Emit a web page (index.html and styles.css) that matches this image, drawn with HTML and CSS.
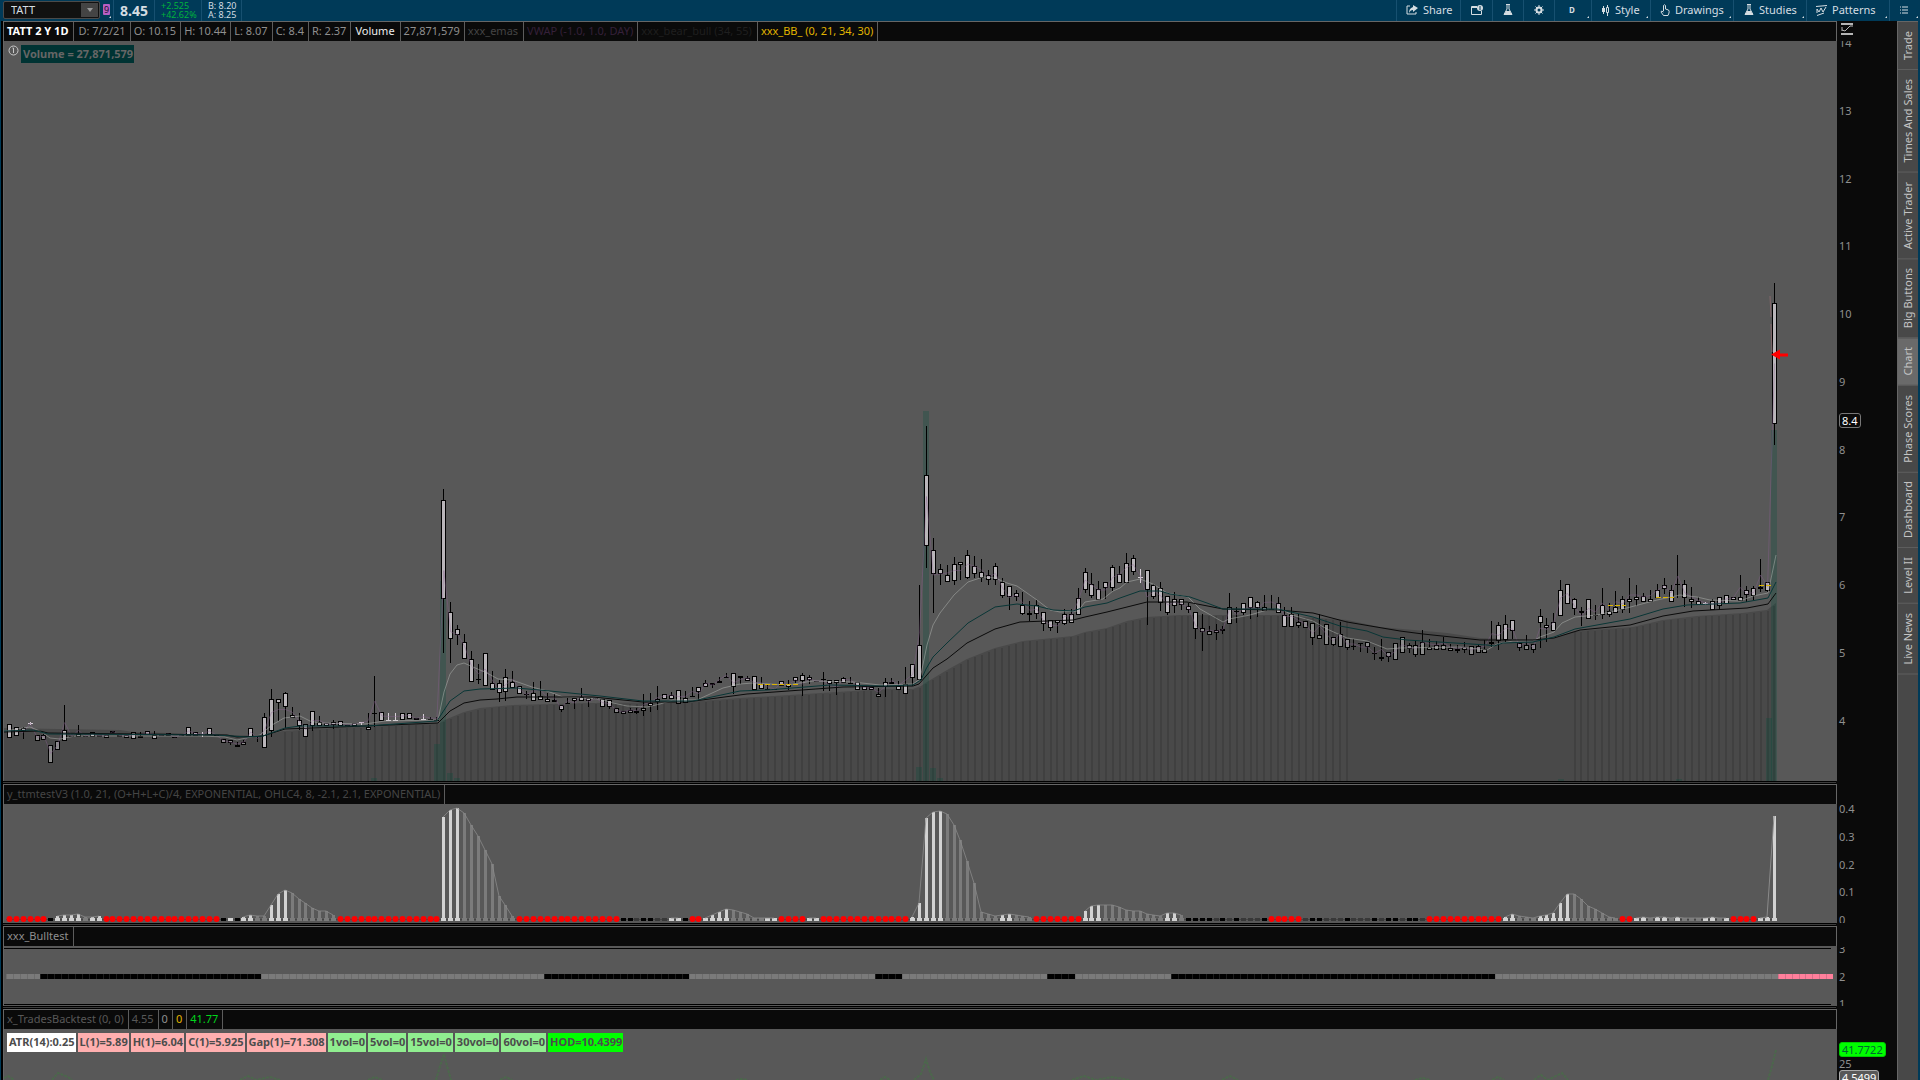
FILE: index.html
```html
<!DOCTYPE html>
<html lang="en">
<head>
<meta charset="utf-8">
<title>TATT - Charts</title>
<link rel="stylesheet" href="styles.css">
</head>
<body>
<header class="toolbar">
  <div class="symbol-box">
    <input class="symbol-input" type="text" value="TATT" aria-label="Symbol">
    <button class="symbol-drop" aria-label="Symbol list"><svg width="6" height="4" viewBox="0 0 6 4"><path d="M0 0h6L3 4z" fill="#999"/></svg></button>
  </div>
  <button class="link-color corner" aria-label="Link color"><span class="link-chip">9</span></button>
  <div class="quote-last">8.45</div>
  <div class="quote-pair up"><span>+2.525</span><span>+42.62%</span></div>
  <div class="quote-pair"><span>B: 8.20</span><span>A: 8.25</span></div>
  <nav class="tools">
    <button class="tool share"><svg width="12" height="10" viewBox="0 0 12 10"><path d="M4 1H1v8h9V7" fill="none" stroke="#d5dde2"/><path d="M7 0l5 3-5 4V5C5 5 4 6 3 8c0-3 1-5 4-6z" fill="#d5dde2"/></svg>Share</button>
    <button class="tool snap" aria-label="Detach"><svg width="12" height="10" viewBox="0 0 12 10"><path d="M6 1.500H.5v8h10V6" fill="none" stroke="#d5dde2"/><path d="M1 2h5" stroke="#d5dde2" stroke-width="2"/><circle cx="9" cy="3" r="3" fill="#d5dde2"/><path d="M9 1v4" stroke="#003a58"/></svg></button>
    <button class="tool flask" aria-label="Edit studies"><svg width="10" height="12" viewBox="0 0 10 12"><path d="M3 .5h4M4 1v4L1 10.500h8L6 5V1" fill="none" stroke="#d5dde2"/><path d="M3 7h4l2 4H1z" fill="#d5dde2"/></svg></button>
    <button class="tool gear" aria-label="Settings"><svg width="10" height="10" viewBox="0 0 10 10"><circle cx="5" cy="5" r="2.500" fill="none" stroke="#d5dde2" stroke-width="2"/><path d="M5 0v2M5 8v2M0 5h2M8 5h2M1.500 1.500L3 3M7 7l1.500 1.500M8.500 1.500L7 3M3 7L1.500 8.500" stroke="#d5dde2"/></svg></button>
    <button class="tool period corner">D</button>
    <button class="tool style corner"><svg width="9" height="11" viewBox="0 0 9 11"><path d="M2.500 1v8M6.500 0v11" stroke="#d5dde2"/><path d="M1 3h3v4H1z" fill="#d5dde2"/><path d="M5.500 2.500h2v5h-2z" fill="#003a58" stroke="#d5dde2"/></svg>Style</button>
    <button class="tool drawings corner"><svg width="10" height="12" viewBox="0 0 10 12"><path d="M3.500 7V1.500Q4.500 0 5.500 1.500V5l3 1q1 1 .5 3L8 11.500H3.500L1 8q0-2 2.500 0" fill="none" stroke="#d5dde2"/></svg>Drawings</button>
    <button class="tool studies corner"><svg width="10" height="12" viewBox="0 0 10 12"><path d="M3 .5h4M4 1v4L1 10.500h8L6 5V1" fill="none" stroke="#d5dde2"/><path d="M3 7h4l2 4H1z" fill="#d5dde2"/></svg>Studies</button>
    <button class="tool patterns corner"><svg width="11" height="11" viewBox="0 0 11 11"><path d="M0 1.500L11 .5M1 10.500L8 8M1 8V4l2 3 2-4 2 4 3-5" fill="none" stroke="#d5dde2"/></svg>Patterns</button>
    <button class="tool menu corner" aria-label="Menu"><svg width="8" height="8" viewBox="0 0 8 8"><path d="M0 1h1M2 1h6M0 4h1M2 4h6M0 7h1M2 7h6" stroke="#d5dde2"/></svg></button>
  </nav>
</header>
<div class="workspace">
  <main class="charts">
    <section class="panel">
      <div class="frame">
        <div class="legend">
          <span class="title">TATT 2 Y 1D</span><span class="date">D: 7/2/21</span><span>O: 10.15</span><span>H: 10.44</span><span>L: 8.07</span><span>C: 8.4</span><span>R: 2.37</span><span class="bright">Volume</span><span>27,871,579</span><span class="emas">xxx_emas</span><span class="vwap">VWAP (-1.0, 1.0, DAY)</span><span class="bear">xxx_bear_bull (34, 55)</span><span class="bands">xxx_BB_ (0, 21, 34, 30)</span>
        </div>
        <div class="plot">
          <svg id="price" viewBox="4 41 1833 740" preserveAspectRatio="none"></svg>
          <div class="plot-note"><svg width="11" height="11" viewBox="0 0 11 11"><circle cx="5.500" cy="5.500" r="4.500" fill="none" stroke="#c8c8c8"/><path d="M5.500 3v5M4.500 3h1" stroke="#c8c8c8"/></svg><span>Volume = 27,871,579</span></div>
        </div>
      </div>
      <div class="axis">
        <button class="scale-btn" aria-label="Price scale"><svg width="12" height="12" viewBox="0 0 12 12"><path d="M0 1h12M0 11h12" stroke="#b5b5b5" stroke-width="2"/><path d="M1 4v4M1 7l3 1 5-5 3 0" fill="none" stroke="#b5b5b5"/></svg></button>
        <ul class="ticks price-ticks"><li>14</li><li>13</li><li>12</li><li>11</li><li>10</li><li>9</li><li>8</li><li>7</li><li>6</li><li>5</li><li>4</li></ul>
        <span class="badge last">8.4</span>
      </div>
    </section>
    <div class="divider"></div>
    <section class="panel">
      <div class="frame">
        <div class="legend"><span class="ttm">y_ttmtestV3 (1.0, 21, (O+H+L+C)/4, EXPONENTIAL, OHLC4, 8, -2.1, 2.1, EXPONENTIAL)</span></div>
        <div class="plot"><svg id="ttm" viewBox="4 804 1833 119" preserveAspectRatio="none"></svg></div>
      </div>
      <div class="axis"><ul class="ticks ttm-ticks"><li>0.4</li><li>0.3</li><li>0.2</li><li>0.1</li><li>0</li></ul></div>
    </section>
    <div class="divider"></div>
    <section class="panel">
      <div class="frame">
        <div class="legend"><span class="bulltest">xxx_Bulltest</span></div>
        <div class="plot"><svg id="bull" viewBox="4 946 1833 60" preserveAspectRatio="none"></svg></div>
      </div>
      <div class="axis"><ul class="ticks bull-ticks"><li>3</li><li>2</li><li>1</li></ul></div>
    </section>
    <div class="divider"></div>
    <section class="panel">
      <div class="frame">
        <div class="legend"><span class="trades">x_TradesBacktest (0, 0)</span><span class="trades">4.55</span><span>0</span><span class="bands">0</span><span class="gain">41.77</span></div>
        <div class="plot">
          <svg id="trades" viewBox="4 1029 1833 51" preserveAspectRatio="none"></svg>
          <div class="chips"><span class="white">ATR(14):0.25</span><span class="pink">L(1)=5.89</span><span class="pink">H(1)=6.04</span><span class="pink">C(1)=5.925</span><span class="pink">Gap(1)=71.308</span><span class="green">1vol=0</span><span class="green">5vol=0</span><span class="green">15vol=0</span><span class="green">30vol=0</span><span class="green">60vol=0</span><span class="lime">HOD=10.4399</span></div>
        </div>
      </div>
      <div class="axis"><ul class="ticks trade-ticks"><li>50</li><li>25</li></ul><span class="badge hot">41.7722</span><span class="badge cold">4.5499</span></div>
    </section>
  </main>
  <nav class="gadgets">
    <button>Trade</button><button>Times And Sales</button><button>Active Trader</button><button>Big Buttons</button><button class="on">Chart</button><button>Phase Scores</button><button>Dashboard</button><button>Level II</button><button>Live News</button>
  </nav>
</div>
<script src="chart.js"></script>
</body>
</html>
```
FILE: styles.css
```css
* { box-sizing: border-box; }
body {
  margin: 0;
  height: 100vh;
  display: flex;
  flex-direction: column;
  overflow: hidden;
  background: #003a58;
  color: #8f8f8f;
  font: 11px/14px "Noto Sans", "Open Sans", sans-serif;
}
button, input { font: inherit; color: inherit; background: none; border: 0; padding: 0; margin: 0; }
ul { list-style: none; margin: 0; padding: 0; }

.toolbar { flex: none; display: flex; height: 21px; padding-left: 3px; color: #d5dde2; }
.symbol-box { display: flex; width: 97px; height: 18px; margin-top: 1px; background: #111; border: 1px solid #4a4a4a; border-radius: 2px; }
.symbol-input { flex: 1; min-width: 0; padding: 0 7px; }
.symbol-drop { width: 17px; margin: 1px; background: #444; display: grid; place-items: center; }
.link-color { width: 14px; display: flex; padding: 4px 3px; border-right: 1px solid #175070; }
.link-chip { width: 8px; height: 11px; background: #b65fc4; color: #1a1030; font: 9px/11px "Noto Sans", sans-serif; border-radius: 1px; }
.corner { position: relative; }
.corner::after { content: ""; position: absolute; right: 2px; bottom: 3px; border: 1px solid #d5dde2; border-top-color: transparent; border-left-color: transparent; }
.quote-last { width: 41px; padding-left: 6px; font-size: 14px; line-height: 21px; font-weight: 700; border-right: 1px solid #175070; }
.quote-pair { display: flex; flex-direction: column; width: 47px; padding: 1px 0 0 6px; font-size: 9px; line-height: 9px; border-right: 1px solid #175070; }
.quote-pair + .quote-pair { width: 40px; }
.up { color: #00b33c; }
.tools { display: flex; margin-left: auto; }
.tool { display: flex; align-items: center; gap: 5px; padding: 0 9px 1px; border-left: 1px solid #175070; }
.tool svg { flex: none; }
.share { width: 64px; }
.snap { width: 32px; padding-left: 10px; }
.flask, .gear { width: 31px; padding-left: 10px; }
.period { width: 37px; padding-left: 14px; font-size: 8px; font-weight: 700; }
.style { width: 59px; }
.drawings { width: 83px; }
.studies { width: 73px; padding-left: 10px; }
.patterns { width: 83px; }
.menu { width: 31px; padding-left: 10px; }

.workspace { flex: 1; min-height: 0; display: flex; margin: 0 2px 0 1px; padding-left: 2px; background: #000; }
.charts { flex: 1; min-width: 0; display: grid; grid-template-rows: 760fr 3px 139fr 3px 80fr 3px 71fr; background: #0a0a0a; }
.divider { margin-right: 61px; background: linear-gradient(#000 1px, #3c3c3c 1px, #3c3c3c 2px, #000 2px); }
.panel { display: grid; grid-template-columns: minmax(0, 1fr) 60px; min-height: 0; }
.frame { display: flex; flex-direction: column; min-height: 0; border-left: 1px solid #666; }
.legend { flex: none; display: flex; height: 20px; background: #0a0a0a; border-top: 1px solid #666; border-right: 1px solid #666; white-space: nowrap; line-height: 17px; }
.legend span { padding: 0 4px 0 3px; border-right: 1px solid #5c5c5c; }
.legend .title { padding-right: 5px; color: #fff; font-weight: 700; }
.legend .date { padding-left: 4px; }
.legend .bright { padding: 0 5px 0 4px; color: #eee; }
.legend .bulltest { padding-right: 5px; }
.legend .emas { padding-right: 5px; color: #444; }
.legend .vwap { color: #352039; }
.legend .bear { padding-right: 5px; color: #1f1f1f; }
.legend .bands { color: #e0b400; }
.legend .ttm { color: #454545; }
.legend .trades { color: #585858; }
.legend .gain { color: #00d61c; }
.plot { flex: 1; position: relative; min-height: 0; background: #585858; }
.plot > svg { display: block; width: 100%; height: 100%; }
.plot-note { position: absolute; top: 4px; left: 4px; display: flex; gap: 2px; }
.plot-note span { padding: 0 1px 0 2px; background: #003333; color: #666; font-weight: 700; line-height: 18px; }

.axis { position: relative; min-height: 0; overflow: hidden; }
.scale-btn { display: block; height: 12px; margin: 2px 0 0 4px; }
.scale-btn svg { display: block; }
.ticks { display: flex; flex-direction: column; justify-content: space-between; padding-left: 2px; }
.price-ticks { height: 91%; margin-top: 1px; }
.price-ticks li:first-child { clip-path: inset(5px 0 0 0); }
.ttm-ticks { height: 100%; padding-top: 18px; }
.ttm-ticks li:last-child { margin-bottom: -4px; }
.bull-ticks { height: 100%; padding-top: 16px; }
.bull-ticks li:first-child { clip-path: inset(5px 0 0 0); }
.bull-ticks li:last-child { margin-bottom: -5px; }
.trade-ticks { height: 62px; padding-top: 32px; }
.badge { position: absolute; left: 2px; padding: 0 2px; height: 15px; line-height: 13px; border: 1px solid #777; border-radius: 3px; background: #0a0a0a; color: #fff; }
.last { top: 52%; margin-top: -3px; }
.hot { top: 33px; background: #0f0; border-color: #0c0; color: #063; }
.cold { top: 61px; background: #585858; border-color: #aaa; }
.chips { position: absolute; top: 4px; left: 3px; display: flex; gap: 2px; white-space: nowrap; }
.chips span { padding: 0 1px 1px 2px; line-height: 18px; font-weight: 700; color: #4c4c4c; }
.white { background: #fff; }
.pink { background: #ffafaf; }
.green { background: #90ee90; }
.lime { background: #0f0; }

.gadgets { flex: none; width: 21px; background: #484848; border-left: 1px solid #666; border-top: 1px solid #666; display: flex; flex-direction: column; }
.gadgets button { writing-mode: vertical-rl; transform: rotate(180deg); width: 20px; padding: 9px 0; text-align: center; color: #c4c4c4; border-top: 1px solid #5f5f5f; white-space: nowrap; }
.gadgets .on { background: #6a6a6a; }
```
FILE: chart.js
```js
const FIRST = 9.5, STEP = 6.8945;
const xAt = i => FIRST + STEP * i;
const rect = (x, y, w, h, fill, extra = '') =>
  `<rect x="${x}" y="${y}" width="${w}" height="${h}" fill="${fill}" ${extra}/>`;
const line = (points, stroke, extra = '') =>
  `<polyline points="${points}" fill="none" stroke="${stroke}" ${extra}/>`;

// One bar per entry: high, body top, body bottom, low. A leading * marks a bright doji.
const bars = `724 724 737 737|727 727 735 735|727 728 730 738|*722 723 723 724|735 735 740 740|733 735 739 739|745 745 762 762|741 741 749 749|705 730 740 740|736 736 736 736|725 734 736 736|736 736 736 736|732 732 736 736|735 735 736 736|735 735 737 737|731 731 732 732|735 735 736 736|735 735 737 737|732 732 738 738|732 736 737 737|731 731 734 734|731 735 738 738|735 735 735 735|733 733 735 735|737 737 737 737|735 735 735 735|727 727 735 735|732 732 735 735|*732 734 734 736|728 728 734 734|735 735 735 735|739 739 742 742|740 740 742 744|742 745 746 746|740 742 744 744|728 728 736 736|736 736 736 741|713 717 747 747|689 699 730 736|699 699 702 720|692 693 706 727|707 715 717 717|713 720 725 729|724 724 736 736|711 711 725 730|716 722 725 725|723 723 725 725|720 722 724 728|721 721 725 725|725 725 725 725|723 723 725 725|*722 722 722 724|713 727 729 729|676 713 713 726|712 712 720 720|*713 720 720 720|*713 720 720 720|713 713 719 719|713 713 718 718|718 718 719 719|*714 719 719 719|717 719 719 719|717 720 720 720|489 500 598 652|602 612 638 662|625 629 634 644|634 642 658 658|651 659 681 681|664 679 679 683|653 653 685 685|671 683 689 689|680 683 692 701|669 677 691 700|671 682 687 687|686 686 693 693|691 694 694 698|682 693 700 700|681 696 699 699|693 699 701 701|694 700 701 701|705 705 709 711|698 703 703 703|698 698 700 708|688 697 700 700|698 698 700 706|698 698 698 698|699 699 706 706|700 700 706 708|708 708 712 712|711 711 713 713|708 710 712 712|708 711 712 713|694 708 710 715|693 703 705 711|686 699 701 709|694 694 698 698|692 695 698 698|690 690 703 703|691 698 702 702|687 696 696 696|687 687 691 700|680 683 686 686|683 683 684 687|677 681 682 682|673 677 677 677|673 673 686 693|676 676 677 683|676 678 680 680|676 676 689 689|677 684 688 688|685 689 689 689|689 689 689 689|681 681 685 685|680 684 686 689|677 677 680 682|673 675 680 695|675 677 679 683|681 681 681 681|672 679 679 690|680 680 683 690|680 680 682 694|677 678 682 682|677 683 683 683|682 682 689 689|686 686 689 689|687 687 689 689|688 694 696 696|678 682 686 696|678 682 683 683|681 686 689 689|667 684 693 693|664 664 677 685|585 645 679 679|426 475 545 567|538 550 573 612|564 569 573 584|565 575 581 581|557 564 580 584|562 562 564 579|550 555 577 578|556 566 573 577|559 572 577 581|570 575 579 584|563 566 579 584|578 582 595 597|586 586 596 609|590 593 596 600|592 605 613 614|601 613 614 620|600 605 613 618|612 612 623 630|620 620 627 630|620 620 622 632|609 614 623 624|609 614 622 622|588 598 614 614|568 572 589 592|573 584 595 597|581 589 599 599|582 582 587 598|565 567 587 590|566 574 582 582|553 563 582 582|555 558 571 574|*569 577 577 582|570 570 589 624|584 585 596 598|582 588 602 610|596 596 612 614|592 599 605 612|599 599 604 609|603 606 609 612|612 612 628 638|614 628 631 650|626 631 634 634|624 630 632 639|626 629 630 633|593 607 623 623|607 611 611 622|603 603 612 614|597 597 607 618|601 602 607 616|595 607 610 610|595 609 609 609|597 603 612 612|607 615 626 626|607 614 626 626|614 622 625 627|621 621 627 627|623 623 637 644|614 635 638 638|624 624 644 644|637 637 644 645|622 634 646 646|639 639 647 649|639 646 646 649|643 643 643 651|642 642 646 652|647 653 653 659|639 657 658 660|652 652 656 661|643 643 659 659|637 637 652 652|643 645 648 652|641 645 654 656|630 642 654 654|639 647 649 649|641 645 649 649|637 645 649 649|644 648 650 650|645 649 650 652|642 647 649 652|646 646 654 654|644 646 652 652|640 649 652 652|621 642 643 646|622 625 640 649|615 624 639 641|620 620 630 638|643 643 647 650|635 645 649 649|644 644 649 652|609 616 622 647|618 625 627 641|613 622 630 630|580 590 615 615|584 584 603 603|598 599 608 614|607 611 612 625|599 599 618 618|605 615 615 619|588 605 614 618|603 611 614 616|591 607 612 612|596 599 609 612|578 599 601 612|585 597 599 605|593 596 601 601|590 599 601 601|584 590 597 597|578 585 588 593|585 590 601 601|555 584 584 597|580 584 597 606|587 599 601 607|597 601 604 604|*602 603 603 604|599 601 609 609|597 597 605 609|595 595 603 603|597 597 599 599|575 597 600 600|586 590 594 601|586 588 595 599|559 587 588 591|582 582 590 591|283 303 423 444`
  .split('|').map(s => ({ bright: s[0] === '*', v: s.replace('*', '').split(' ').map(Number) }));

const cloud = '4,728 57,729 120,730 133,732 200,734 263,736 283,731 333,728 440,723 447,719 464,712 480,708 513,705 593,703 687,702 740,698 790,695 853,691 887,689 913,689 921,686 927,682 947,670 967,659 995,648 1023,641 1073,636 1085,632 1107,628 1127,621 1147,617 1180,615 1278,615 1347,620 1380,627 1447,633 1480,638 1533,640 1554,638 1575,631 1633,627 1663,620 1697,616 1743,613 1767,610 1776,603';
const fast = '4,731 30,727 40,731 50,738 60,739 75,736 200,736 225,737 237,740 260,735 272,725 284,718 300,716 310,721 320,723 365,724 385,721 438,720 444,692 450,674 457,665 464,663 473,667 487,673 498,679 512,680 532,687 547,691 563,697 600,699 613,703 627,706 647,707 660,704 673,700 697,700 710,694 723,688 740,684 753,683 787,685 813,681 853,682 880,685 913,684 920,679 927,645 933,625 940,613 954,595 968,582 983,577 995,578 1007,583 1017,586 1037,600 1050,610 1060,612 1078,611 1085,602 1103,599 1113,591 1120,588 1127,582 1140,579 1153,584 1167,593 1188,597 1200,609 1223,622 1229,619 1250,615 1267,610 1283,610 1292,615 1313,621 1327,629 1347,638 1367,641 1387,649 1400,648 1460,647 1487,650 1497,644 1513,641 1533,641 1540,637 1554,632 1562,623 1575,617 1597,615 1623,609 1657,600 1680,595 1697,597 1710,600 1740,601 1753,596 1768,593 1776,555';
const mid = '4,731 33,730 48,734 217,735 247,737 263,736 285,728 300,726 367,726 437,721 450,701 464,691 480,689 517,688 550,691 600,696 643,701 693,701 740,691 767,690 830,685 887,686 913,685 921,680 926,669 933,657 947,643 968,623 995,607 1017,604 1037,606 1053,610 1073,611 1085,607 1107,603 1120,598 1140,591 1160,591 1170,594 1190,597 1207,603 1223,609 1278,609 1313,617 1340,626 1367,631 1383,637 1407,640 1487,645 1494,646 1503,643 1533,642 1554,637 1575,629 1630,619 1663,609 1687,605 1740,603 1768,598 1776,582';
const slow = '4,732 40,731 48,733 227,735 237,737 263,736 285,729 340,727 438,723 450,711 464,703 480,700 497,699 517,697 593,697 643,702 687,702 747,694 843,687 913,686 919,684 933,668 947,659 967,643 995,629 1020,622 1073,620 1085,617 1107,612 1147,602 1187,602 1223,609 1278,610 1313,613 1347,622 1400,631 1423,634 1480,640 1533,640 1554,638 1580,630 1630,625 1663,616 1693,611 1747,608 1768,604 1776,593';

let out = `<polygon points="${cloud} 1776,781 4,781" fill="#494949"/>`;
const cloudPts = cloud.split(' ').map(p => p.split(',').map(Number));
const cloudY = x => {
  const k = cloudPts.findIndex(p => p[0] >= x);
  if (k < 1) return 603;
  const [a, b] = [cloudPts[k - 1], cloudPts[k]];
  return a[1] + (b[1] - a[1]) * (x - a[0]) / (b[0] - a[0]);
};
for (let i = 40; i <= 256; i++) {
  if (i > 194 && i < 227) continue;
  const x = Math.round(xAt(i) - 1), y = Math.round(cloudY(x)) + 1;
  out += rect(x, y, 2, 781 - y, '#404040');
}
// Volume columns
[[434, 744], [440, 581], [447, 773], [454, 778], [371, 778], [916, 767], [923, 411], [930, 768], [937, 778], [1766, 718], [1771, 430], [1558, 779], [1676, 779]]
  .forEach(([x, y]) => { out += rect(x, y, 6, 781 - y, '#004d3a', 'fill-opacity=".26"'); });

bars.forEach(({ bright, v: [h, t, b, l] }, i) => {
  const c = Math.floor(xAt(i)), ink = bright ? '#d8d0d8' : '#000';
  if (l > h) out += rect(c, h, 1, l - h + 1, ink);
  if (b - t < 2) out += rect(c - 2, t, 5, b - t + 1, ink);
  else out += rect(c - 2, t, 5, b - t + 1, '#000') + rect(c - 1, t + 1, 3, b - t - 1, t > cloudY(c) + 3 ? '#8c8c8c' : '#bab6ba');
});
out += line(bars.map(({ v }, i) => `${xAt(i)},${(v[0] + v[3]) / 2}`).join(' '), '#8a5f92', 'stroke-opacity=".4"');
out += line('1770,296 1771,317', '#84686c') + line('1771,324 1772,352', '#84686c');
out += line(fast, '#bcc0bc', 'stroke-opacity=".45"') + line(slow, '#0a0a0a') + line(mid, '#093636');
[[758, 684, 41], [1608, 605, 18], [1656, 597, 18], [1759, 585, 12]].forEach(([x, y, w]) => {
  out += `<path d="M${x} ${y + .5}h${w}" stroke="#dcb400" stroke-dasharray="5 2"/>`;
});
out += '<path d="M1771 354.500l9-5v4h8v3h-8v3z" fill="#f00"/>';
document.getElementById('price').innerHTML = out;

// Histogram runs: kind, then the bar top; kinds without a top stay on the base line.
const runs = `r6 k w916 w915 w915 w914 g917 w917 w916 r17 k w k w917 w915 g916 g916 w905 w894 w890 g893 g899 g903 g908 g911 g911 g915 r15 w817 w810 w808 g813 g825 g836 g850 g864 g896 g905 g916 r15 k k d k k d d w w k r2 w w915 w912 w909 g910 g912 g914 g g w w r4 w w r13 w917 w903 w818 w812 w811 g814 g825 g840 g861 g883 g912 g914 g916 w915 w914 g915 g916 g917 r7 w911 w906 w905 g905 g905 g907 g910 g911 g911 g914 g915 g916 w913 w913 g915 k k k k d k d k d d d k r5 d k k d d d k d d d k d k k d k k d r11 w917 w914 g916 g917 g w916 w915 w913 w903 w894 g894 g899 g906 g909 g913 g917 g r2 w w917 g w917 w917 g w917 g g g w w917 g w r4 w w917 w816`.split(' ');
const fills = { w: '#d2d2d2', g: '#7b7b7b', k: '#000', d: '#383838', r: '#300' };
let n = 0, base = '', dots = '', curve = [];
runs.forEach(r => {
  const kind = r[0], num = Number(r.slice(1));
  const count = kind === 'r' ? num : 1;
  for (let k = 0; k < count; k++, n++) {
    const x = Math.floor(xAt(n)), top = kind !== 'r' && num ? num : 918;
    base += rect(x - 2, 918, 5, 3, fills[kind]);
    if (top < 918) base += rect(x - 1, top, 3, 921 - top, fills[kind]);
    if (kind === 'r') dots += `<circle cx="${x + .5}" cy="919" r="3" fill="#f00"/>`;
    if (kind === 'w' || kind === 'g') curve.push(`${x},${top}`);
    else if (curve.length) { base += line(curve.join(' '), '#8a8a8a', 'stroke-opacity=".8"'); curve = []; }
  }
});
base += line(curve.join(' '), '#8a8a8a');
document.getElementById('ttm').innerHTML = rect(6, 919, 1771, 1, '#444') + base + dots;

// Trend strip: the bar number at which each colour ends.
const segments = [[5, '#7a7a7a'], [37, '#000'], [78, '#7a7a7a'], [99, '#000'], [126, '#7a7a7a'], [130, '#000'], [151, '#7a7a7a'], [155, '#000'], [169, '#7a7a7a'], [216, '#000'], [257, '#7a7a7a'], [265, '#ff7f9b']];
const gaps = { '#000': '#1c1c1c', '#7a7a7a': '#6c6c6c', '#ff7f9b': '#d8708a' };
let k = 0;
let strip = rect(4, 948, 1827, 1, '#000') + rect(4, 1004, 1827, 1, '#000');
for (let i = 0; i < 265; i++) {
  while (segments[k][0] <= i) k++;
  const x = Math.floor(xAt(i) - 3), fill = segments[k][1];
  strip += rect(x, 974, 7, 5, fill) + rect(x, 974, 1, 5, gaps[fill]);
}
document.getElementById('bull').innerHTML = strip;

const spikes = ['4,1078 8,1076 14,1080', '52,1080 58,1073 68,1077 72,1080', '240,1080 248,1076 256,1080 270,1077 280,1080', '368,1080 375,1077 382,1080', '436,1080 440,1066 444,1054 447,1066 451,1080', '500,1080 506,1077 512,1080', '736,1080 741,1079 748,1080', '880,1080 885,1077 890,1080', '914,1080 921,1074 926,1059 930,1072 934,1080', '1072,1080 1084,1076 1096,1080 1112,1077 1130,1080', '1222,1080 1230,1076 1238,1080', '1415,1080 1423,1078 1430,1080', '1492,1080 1498,1077 1504,1080', '1534,1080 1541,1075 1548,1080 1562,1073 1568,1080', '1768,1080 1772,1066 1776,1050'];
document.getElementById('trades').innerHTML = spikes.map(s => line(s, '#4c684c', 'stroke-dasharray="3 1" stroke-width="2"')).join('');
```
